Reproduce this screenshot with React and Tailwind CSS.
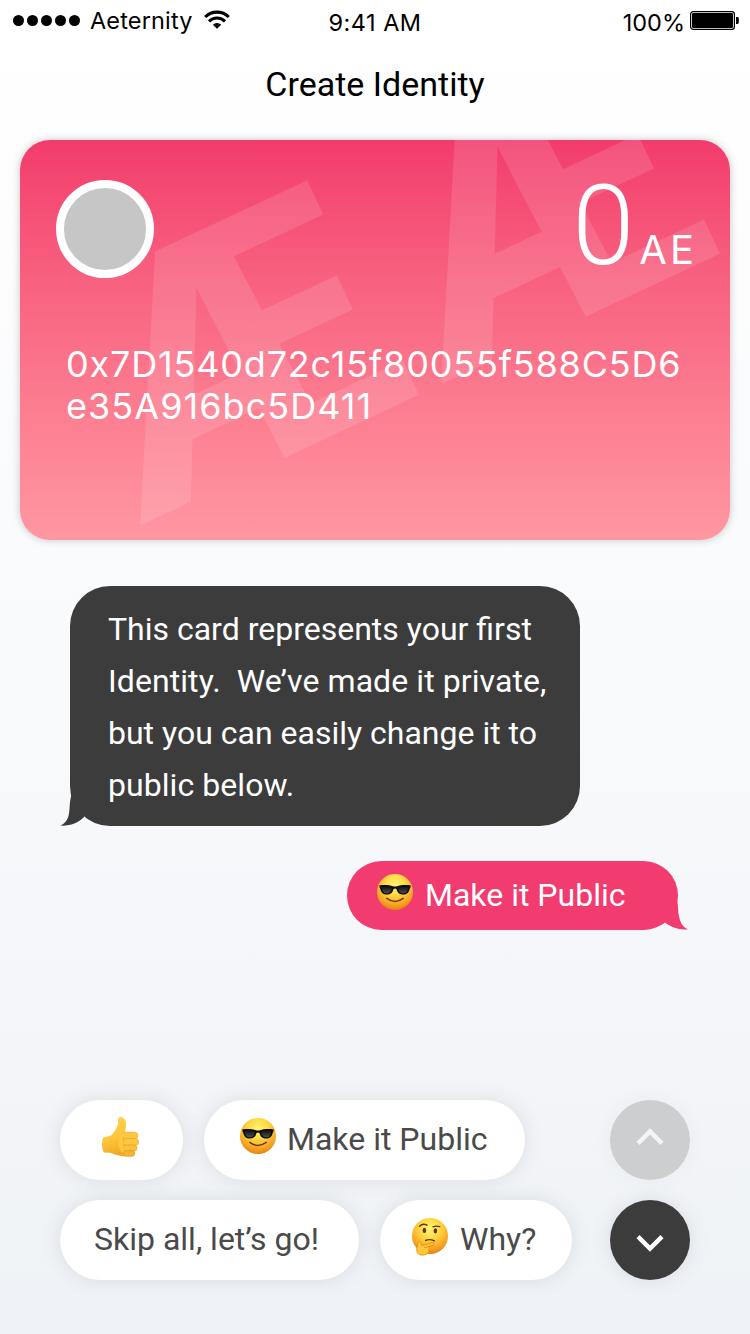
import React from "react";

function Wifi() {
  return (
    <svg width="26" height="20" viewBox="0 0 26 20" className="block">
      <path d="M13 18.8 L8.8 14.8 A6 6 0 0 1 17.2 14.8 Z" fill="#000" />
      <path d="M5 11.4 A11.2 11.2 0 0 1 21 11.4" fill="none" stroke="#000" strokeWidth="3" />
      <path d="M1.2 7 A16.8 16.8 0 0 1 24.8 7" fill="none" stroke="#000" strokeWidth="3.1" />
    </svg>
  );
}

function Battery() {
  return (
    <svg width="50" height="20" viewBox="0 0 50 20" className="block">
      <rect x="0.6" y="0.6" width="43.8" height="17.8" rx="2.6" fill="#fff" stroke="#000" strokeWidth="1.2" />
      <rect x="2" y="2" width="41" height="15" rx="1.2" fill="#000" />
      <path d="M46 6 h1.4 a1.4 1.4 0 0 1 1.4 1.4 v4.2 a1.4 1.4 0 0 1 -1.4 1.4 h-1.4 z" fill="#000" />
    </svg>
  );
}

function FaceDefs({ id }) {
  return (
    <defs>
      <radialGradient id={id} cx="0.5" cy="0.3" r="0.72">
        <stop offset="0" stopColor="#fff27a" />
        <stop offset="0.34" stopColor="#ffde48" />
        <stop offset="0.6" stopColor="#fdbc2f" />
        <stop offset="0.84" stopColor="#f2981e" />
        <stop offset="1" stopColor="#e07a12" />
      </radialGradient>
      <linearGradient id={id + "-lens"} x1="0" y1="0" x2="0" y2="1">
        <stop offset="0" stopColor="#111" />
        <stop offset="1" stopColor="#4d4d4d" />
      </linearGradient>
    </defs>
  );
}

function Cool({ id }) {
  return (
    <svg width="38" height="38" viewBox="0 0 38 38" className="block shrink-0">
      <FaceDefs id={id} />
      <circle cx="19" cy="19" r="18" fill={`url(#${id})`} />
      <path d="M10.8 25.4 Q19 31.4 27.2 25.4" fill="none" stroke="#6d3a0a" strokeWidth="1.5" strokeLinecap="round" />
      <path d="M3.2 12.4 C8 11.4 14 12 16.8 13.2 Q19 13.8 21.2 13.2 C24 12 30 11.4 34.8 12.4 L34.4 14.6 C33.6 15.2 33.4 21.2 28.6 21.5 C23.6 21.8 21.6 20.2 20.6 16.2 Q19 14.8 17.4 16.2 C16.4 20.2 14.4 21.8 9.4 21.5 C4.6 21.2 4.4 15.2 3.6 14.6 Z" fill="#0c0c0c" />
      <path d="M6 14 C9 13.2 13.2 13.6 15.8 14.7 C15.6 18.8 13.6 20.5 9.8 20.3 C6.6 20.1 6.2 16.8 6 14 Z" fill={`url(#${id}-lens)`} />
      <path d="M32 14 C29 13.2 24.8 13.6 22.2 14.7 C22.4 18.8 24.4 20.5 28.2 20.3 C31.4 20.1 31.8 16.8 32 14 Z" fill={`url(#${id}-lens)`} />
    </svg>
  );
}

function Thinking() {
  return (
    <svg width="38" height="40" viewBox="0 0 38 40" className="block shrink-0">
      <FaceDefs id="think" />
      <circle cx="19" cy="19" r="18" fill="url(#think)" />
      <ellipse cx="13.4" cy="13.4" rx="1.8" ry="2.6" fill="#63320a" />
      <ellipse cx="24.4" cy="13.8" rx="1.8" ry="2.6" fill="#63320a" />
      <path d="M8.6 9.2 Q11.6 6 16 8.2" fill="none" stroke="#63320a" strokeWidth="1.4" strokeLinecap="round" />
      <path d="M22 9.8 Q25 8.6 28.8 9.6" fill="none" stroke="#63320a" strokeWidth="1.4" strokeLinecap="round" />
      <path d="M14.6 23.4 Q18.6 21.6 23.4 23.8" fill="none" stroke="#63320a" strokeWidth="1.4" strokeLinecap="round" />
      <path d="M7 25.4 C7.4 24 9.4 24.2 9.8 25.6 L10.8 28.4 C14 27.8 18 26.2 21.4 25.6 C23.4 25.4 23.6 27.6 22 28.2 L17.6 29.8 C19.4 31.2 18 32.2 17.4 32.4 C18.6 34 17 37.8 12.4 38 C8 38.2 5.8 36.6 5.8 33 C5.8 30.2 6.6 28 7 25.4 Z" fill="#ffc93a" stroke="#e58a14" strokeWidth="0.9" />
      <path d="M13 30.8 L18 29.6" stroke="#e58a14" strokeWidth="0.9" />
    </svg>
  );
}

function Thumb() {
  return (
    <svg width="38" height="42" viewBox="0 0 38 42" className="block">
      <defs>
        <linearGradient id="thumb" x1="0" y1="0" x2="0.3" y2="1">
          <stop offset="0" stopColor="#ffd554" />
          <stop offset="0.6" stopColor="#fdc63c" />
          <stop offset="1" stopColor="#f2a826" />
        </linearGradient>
      </defs>
      <path d="M2 22 C5 20.4 8.6 21 11 18.6 C13.6 15.6 16.2 11.6 17 7.8 C17.2 5.6 16.4 2.4 18.4 1.3 C20.6 0.2 24 2.4 24.8 5.6 C25.6 9.2 24.6 13.2 23.8 17 L32 35 C30 40.6 25 40.4 20 40 C15.6 39.6 12 37.4 9 36.8 L3 36.6 C0.6 32.8 0.4 26 2 22 Z" fill="url(#thumb)" />
      <rect x="21.4" y="16.2" width="15.4" height="6.8" rx="3.4" fill="#fdc741" stroke="#eba92c" strokeWidth="0.7" />
      <rect x="22" y="22.6" width="15.6" height="6.8" rx="3.4" fill="#fdc741" stroke="#eba92c" strokeWidth="0.7" />
      <rect x="22" y="29" width="14" height="6.2" rx="3.1" fill="#fbc03a" stroke="#e8a328" strokeWidth="0.7" />
      <rect x="22.6" y="34.6" width="11.2" height="5.6" rx="2.8" fill="#f6b433" stroke="#e39c24" strokeWidth="0.7" />
      <path d="M24 17 Q20 21 22 25 L23 35 L21 37 L17 30 L19 18 Z" fill="#fdc840" />
    </svg>
  );
}

function Watermark() {
  return (
    <svg width="710" height="400" viewBox="20 140 710 400" className="absolute left-0 top-0">
      <g transform="translate(141 525) rotate(-25.1)" fill="#fff" fillOpacity="0.12" fontFamily="Roboto" fontWeight="700" fontSize="340">
        <text x="-2" y="0">Æ</text>
        <text x="330.5" y="0">Æ</text>
      </g>
    </svg>
  );
}

function Pill({ className, children }) {
  return (
    <button className={`flex h-20 items-center rounded-full bg-white text-[32px] text-[#4a4a4a] shadow-[0_0_20px_rgba(60,70,80,0.13)] ${className}`}>
      {children}
    </button>
  );
}

export default function App() {
  return (
    <div className="flex h-[1334px] w-[750px] flex-col overflow-hidden bg-linear-to-b from-white via-[#f9fafc] to-[#eff2f6] font-[Roboto,sans-serif]">
      <header className="grid h-10 grid-cols-3 items-start px-3 font-[Inter,sans-serif] text-[23.5px] leading-[40px] text-black">
        <div className="flex items-start">
          <div className="flex gap-[3px] pt-[15px] pl-px">
            {[0, 1, 2, 3, 4].map((n) => (
              <span key={n} className="size-[11px] rounded-full bg-black" />
            ))}
          </div>
          <span className="ml-[10px] pt-px tracking-[0.15px]">Aeternity</span>
          <span className="ml-[11px] pt-[10px]"><Wifi /></span>
        </div>
        <div className="pt-[3px] text-center tracking-[0.5px]">9:41 AM</div>
        <div className="flex justify-end">
          <span className="pt-[3px]">100%</span>
          <span className="-mr-[2px] ml-[5px] pt-[11px]"><Battery /></span>
        </div>
      </header>

      <h1 className="mt-[24px] h-10 text-center text-[34px] leading-[40px] text-black">Create Identity</h1>

      <section className="relative mx-5 mt-[36px] h-[400px] shrink-0 overflow-hidden rounded-[30px] bg-linear-to-b from-[#f23b6d] to-[#ff97a2] font-[Inter,sans-serif] text-white shadow-[0_0_8px_rgba(0,0,0,0.22)]">
        <Watermark />
        <div className="relative flex h-[202px] items-start justify-between pt-10 pr-[33px] pl-9">
          <div className="size-[98px] rounded-full border-8 border-white bg-[#c6c6c6]" />
          <div className="-mt-[2px] flex items-baseline">
            <span className="font-[Roboto] text-[112px] leading-[96px] font-light">0</span>
            <span className="ml-[5px] text-[40px] tracking-[3px]">AE</span>
          </div>
        </div>
        <p className="relative pt-px pl-[46px] text-[36px] leading-[42px]">
          <span className="block tracking-[0.82px]">0x7D1540d72c15f80055f588C5D6</span>
          <span className="block tracking-[1.05px]">e35A916bc5D411</span>
        </p>
      </section>

      <main className="flex flex-col text-[32px] text-white">
        <div className="relative mt-[46px] ml-[70px] h-60 w-[510px] rounded-[40px] bg-[#3c3c3c] pt-[17px] pl-[38px] leading-[52px] whitespace-pre">
          <svg width="34" height="34" viewBox="0 0 34 34" className="absolute bottom-0 -left-[10px]">
            <path d="M11.5 3 C9.4 9 10 16 9 21.5 C8 28 5 31.4 0.4 33.6 C9 34.4 18 31 24 25 L30 10 Z" fill="#3c3c3c" />
          </svg>
          <p className="relative">
            <span className="block">This card represents your first</span>
            <span className="block tracking-[0.08px]">{"Identity.  We’ve made it private,"}</span>
            <span className="block">but you can easily change it to</span>
            <span className="block tracking-[0.06px]">public below.</span>
          </p>
        </div>
        <div className="relative mt-[35px] mr-[72px] flex h-[69px] w-[331px] items-center self-end rounded-full bg-[#f23b6f] pl-[29px]">
          <svg width="34" height="34" viewBox="0 0 34 34" className="absolute -right-[10px] bottom-0">
            <path d="M23 4 C24.6 10 23.6 16 25.4 22 C26.6 27.6 29.4 31 34 33.4 C25 34.4 17 31 11 26.6 L8 10 Z" fill="#f23b6f" />
          </svg>
          <span className="-mt-[8px]"><Cool id="cool-sent" /></span>
          <span className="relative ml-[11px] -mt-[2px]">Make it Public</span>
        </div>
      </main>

      <footer className="mt-[170px] flex justify-between pr-[60px] pl-[60px]">
        <div className="flex flex-col gap-5">
          <div className="flex gap-[21px]">
            <Pill className="w-[123px] pb-[7px] pl-[41px]"><Thumb /></Pill>
            <Pill className="w-[321px] pl-[35px]">
              <span className="-mt-[8px]"><Cool id="cool-option" /></span>
              <span className="ml-[10px] -mt-[2px]">Make it Public</span>
            </Pill>
          </div>
          <div className="flex gap-[21px]">
            <Pill className="w-[299px] pb-[2px] pl-[34px]">Skip all, let’s go!</Pill>
            <Pill className="w-[192px] pl-[31px]">
              <span className="-mt-[7px]"><Thinking /></span>
              <span className="ml-[11px] -mt-[2px]">Why?</span>
            </Pill>
          </div>
        </div>
        <div className="flex flex-col gap-5">
          <button className="flex size-20 items-center justify-center rounded-full bg-[#cdced0] shadow-[0_0_20px_rgba(60,70,90,0.05)]">
            <svg width="28" height="18" viewBox="0 0 28 18" className="-mt-[7px]">
              <path d="M2 15.4 L14 3.4 L26 15.4" fill="none" stroke="#f3f4f6" strokeWidth="4.4" />
            </svg>
          </button>
          <button className="flex size-20 items-center justify-center rounded-full bg-[#3c3c3c] shadow-[0_0_20px_rgba(60,70,90,0.13)]">
            <svg width="28" height="18" viewBox="0 0 28 18" className="mt-[5px]">
              <path d="M2 2.6 L14 14.6 L26 2.6" fill="none" stroke="#fff" strokeWidth="4.4" />
            </svg>
          </button>
        </div>
      </footer>
    </div>
  );
}
